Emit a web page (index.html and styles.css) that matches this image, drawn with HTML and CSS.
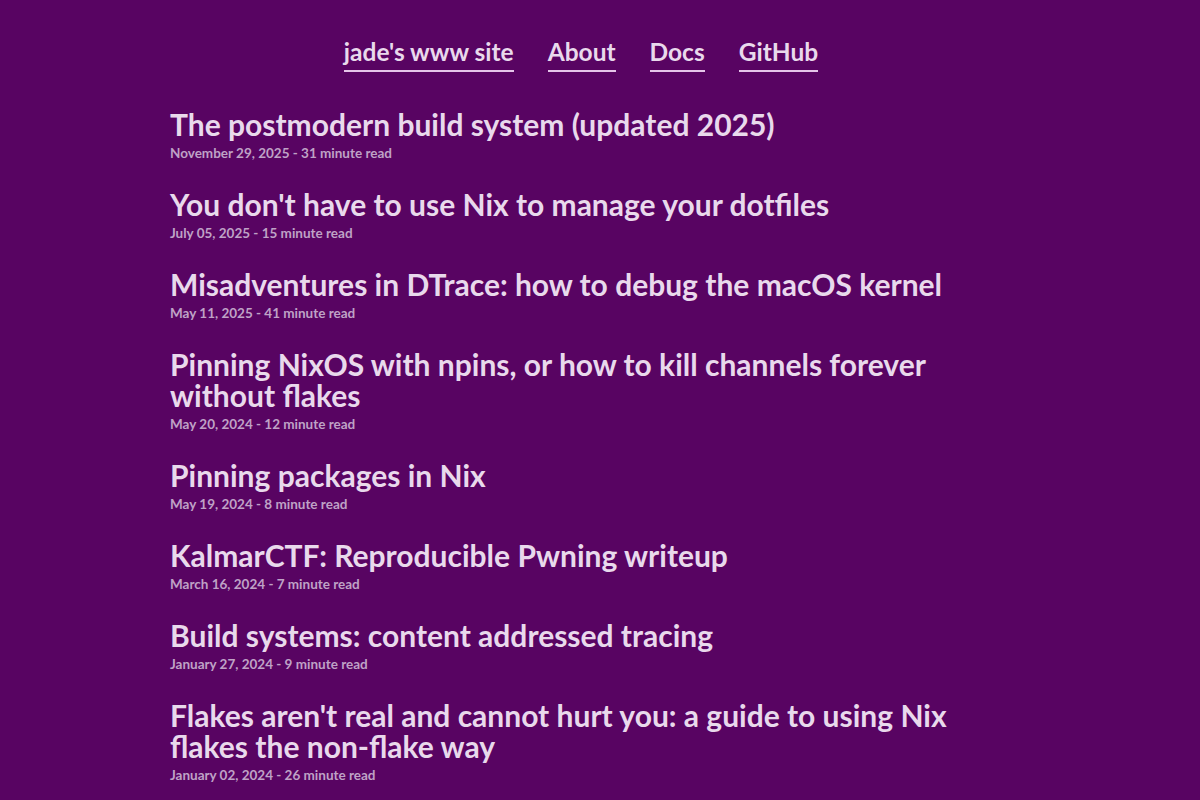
FILE: index.html
```html
<!DOCTYPE html>
<html>
<head>
<meta charset="utf-8">
<link rel="stylesheet" href="styles.css">
</head>
<body>
<nav class="nav">
  <a class="nav-link" href="#">jade's www site</a>
  <a class="nav-link" href="#">About</a>
  <a class="nav-link" href="#">Docs</a>
  <a class="nav-link" href="#">GitHub</a>
</nav>
<main class="posts">
  <article class="post">
    <h2 class="post-title">The postmodern build system (updated 2025)</h2>
    <div class="post-meta">November 29, 2025 - 31 minute read</div>
  </article>
  <article class="post">
    <h2 class="post-title">You don't have to use Nix to manage your dotfiles</h2>
    <div class="post-meta">July 05, 2025 - 15 minute read</div>
  </article>
  <article class="post">
    <h2 class="post-title">Misadventures in DTrace: how to debug the macOS kernel</h2>
    <div class="post-meta">May 11, 2025 - 41 minute read</div>
  </article>
  <article class="post">
    <h2 class="post-title">Pinning NixOS with npins, or how to kill channels forever without flakes</h2>
    <div class="post-meta">May 20, 2024 - 12 minute read</div>
  </article>
  <article class="post">
    <h2 class="post-title">Pinning packages in Nix</h2>
    <div class="post-meta">May 19, 2024 - 8 minute read</div>
  </article>
  <article class="post">
    <h2 class="post-title">KalmarCTF: Reproducible Pwning writeup</h2>
    <div class="post-meta">March 16, 2024 - 7 minute read</div>
  </article>
  <article class="post">
    <h2 class="post-title">Build systems: content addressed tracing</h2>
    <div class="post-meta">January 27, 2024 - 9 minute read</div>
  </article>
  <article class="post">
    <h2 class="post-title">Flakes aren't real and cannot hurt you: a guide to using Nix flakes the non-flake way</h2>
    <div class="post-meta">January 02, 2024 - 26 minute read</div>
  </article>
</main>
</body>
</html>
```
FILE: styles.css
```css
html, body {
  margin: 0;
  padding: 0;
  background: #580462;
}
body {
  font-family: "Lato", "Open Sans", sans-serif;
  color: #e9d9ec;
}
.nav {
  display: flex;
  justify-content: center;
  gap: 34px;
  padding: 37px 38px 0 0;
  margin-bottom: 37px;
}
.nav-link {
  color: #e9d9ec;
  text-decoration: none;
  font-size: 24.5px;
  font-weight: 700;
  line-height: 30px;
  border-bottom: 2px solid #e6c6ea;
  padding-bottom: 3px;
}
.posts {
  width: 860px;
  margin: 0 auto;
}
.post {
  margin-bottom: 26px;
}
.post-title {
  margin: 0;
  font-size: 30px;
  line-height: 31px;
  font-weight: 700;
  color: #e9d9ec;
}
.post-meta {
  margin-top: 3px;
  font-size: 13.5px;
  line-height: 20px;
  font-weight: 700;
  color: #bfa2c6;
}
```
